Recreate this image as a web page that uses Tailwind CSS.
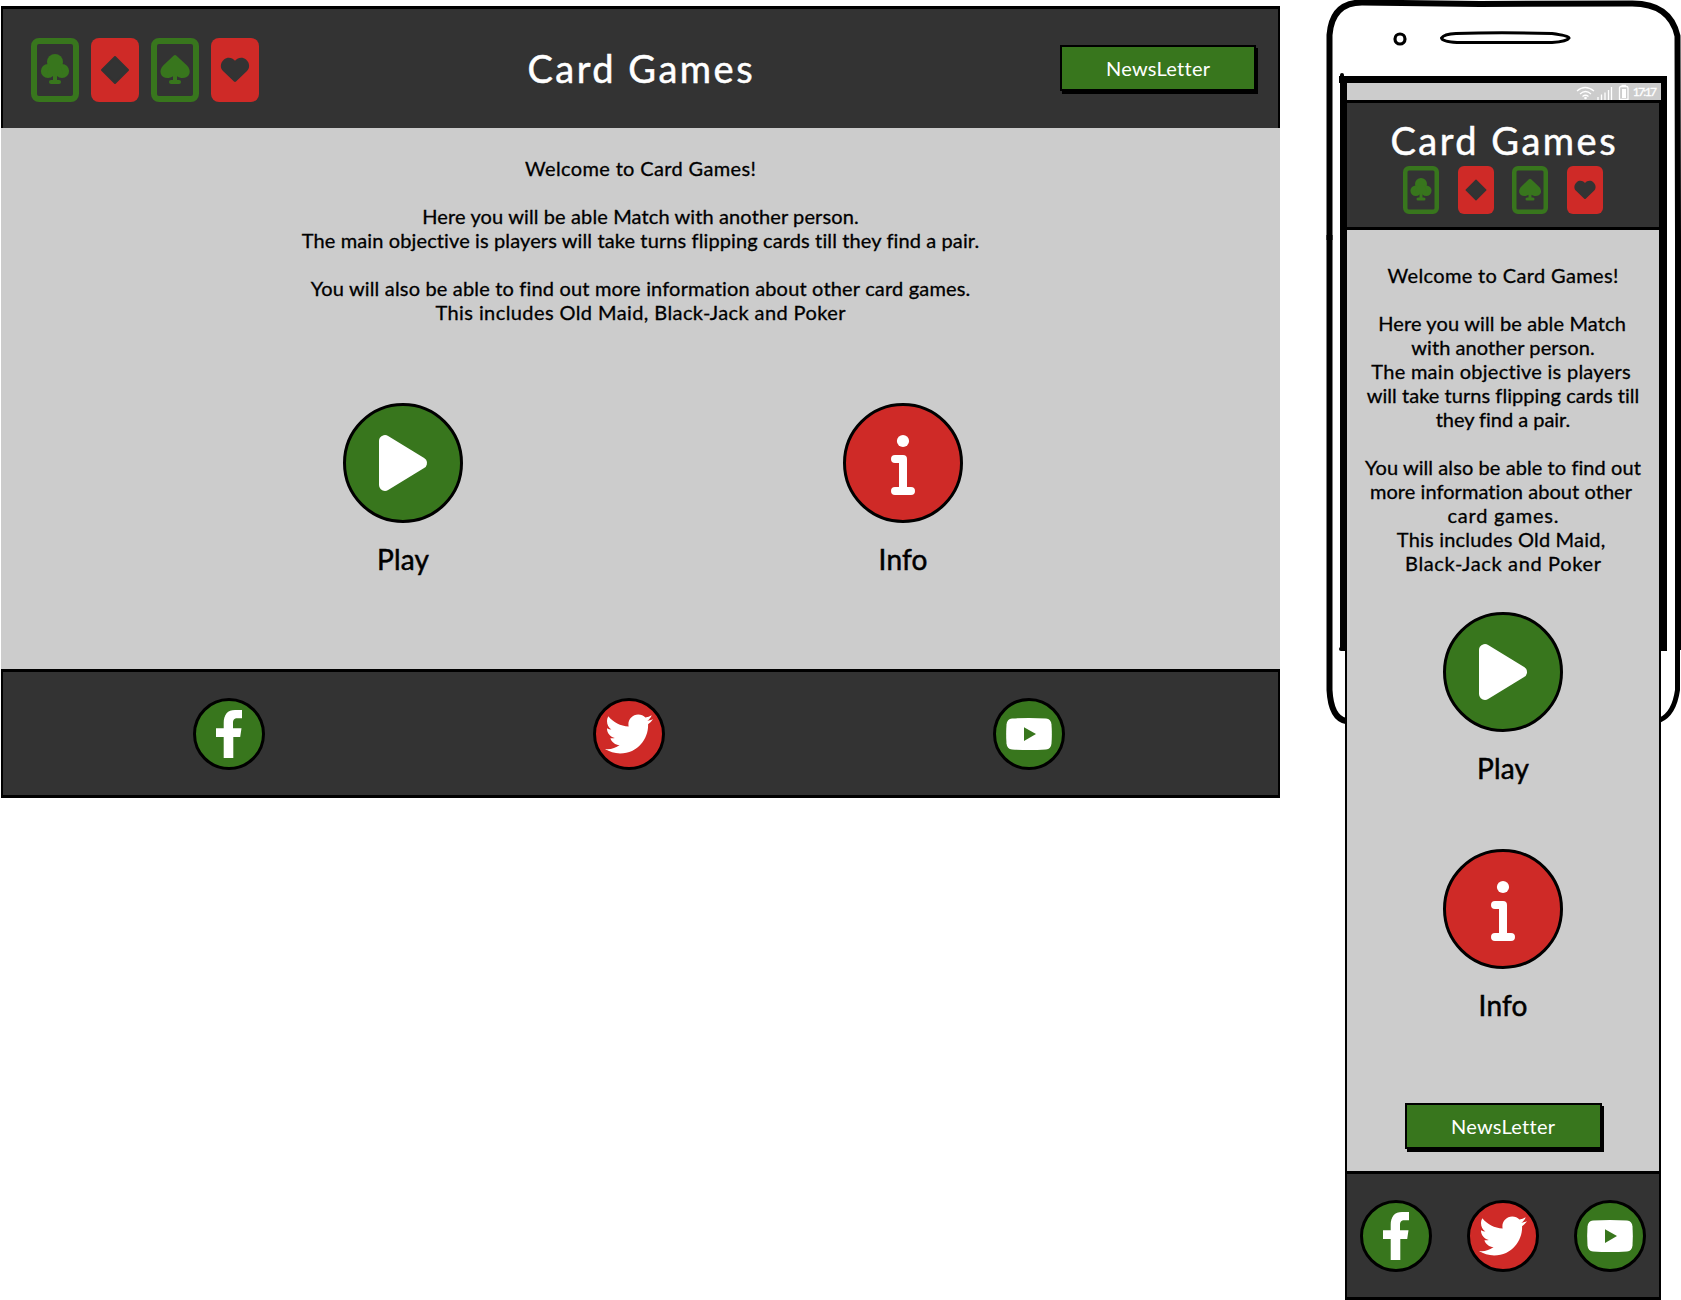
<!DOCTYPE html>
<html lang="en">
<head>
<meta charset="utf-8">
<title>Card Games</title>
<script src="https://cdn.jsdelivr.net/npm/@tailwindcss/browser@4"></script>
</head>
<body class="bg-white">
<svg width="0" height="0" class="absolute">
  <defs>
    <symbol id="club" viewBox="0 0 48 64"><rect x="3" y="3" width="42" height="58" rx="5" fill="none" stroke="#38761d" stroke-width="6"/><g fill="#38761d"><circle cx="24" cy="24" r="8"/><circle cx="17" cy="33" r="7.1"/><circle cx="31" cy="33" r="7.1"/><path d="M19 26h10l3 10H16zM22 34h4v10h-4z"/><rect x="18" y="42" width="12" height="4" rx="2"/></g></symbol>
    <symbol id="diamond" viewBox="0 0 48 64"><rect width="48" height="64" rx="8" fill="#cf2a27"/><path d="M24 19 37 32 24 45 11 32z" fill="#333" stroke="#333" stroke-width="2" stroke-linejoin="round"/></symbol>
    <symbol id="spade" viewBox="0 0 48 64"><rect x="3" y="3" width="42" height="58" rx="5" fill="none" stroke="#38761d" stroke-width="6"/><g fill="#38761d"><path d="M22.5 17.8q1.5-1.5 3 0L36 27.600C38.500 30 39.300 33.500 38.300 36 36.800 40 30.500 41.500 26 38.200V44h-4V38.200C17.500 41.500 11.200 40 9.900 36 8.900 33.500 9.700 30 12.200 27.600z"/><rect x="18" y="42" width="12" height="4" rx="2"/></g></symbol>
    <symbol id="heart" viewBox="0 0 48 64"><rect width="48" height="64" rx="8" fill="#cf2a27"/><path d="M24 22.800C27 19 32 19 35 21.500 39 25 39 30 36 33L25 43.600q-1 .9-2 0L12 33C9 30 9 25 13 21.500 16 19 21 19 24 22.800z" fill="#333"/></symbol>
    <symbol id="play" viewBox="0 0 120 120"><circle cx="60" cy="60" r="58.500" fill="#38761d" stroke="#000" stroke-width="3"/><path d="M42 38v44L78 60z" fill="#fff" stroke="#fff" stroke-width="12" stroke-linejoin="round"/></symbol>
    <symbol id="info" viewBox="0 0 120 120"><circle cx="60" cy="60" r="58.500" fill="#cf2a27" stroke="#000" stroke-width="3"/><circle cx="60" cy="38" r="6.100" fill="#fff"/><path d="M52 56h8v32M52 88h16" fill="none" stroke="#fff" stroke-width="8" stroke-linecap="round" stroke-linejoin="round"/></symbol>
    <symbol id="facebook" viewBox="0 0 72 72"><circle cx="36" cy="36" r="34.500" fill="#38761d" stroke="#000" stroke-width="3"/><path d="M30.700 60V38.900H23V30.200h7.700V25c0-8.500 4-13 11.300-13h7v8.300h-4.500c-3.500 0-4.500 1.700-4.500 5v4.900h8.500l-1.300 8.700H40.300V60z" fill="#fff"/></symbol>
    <symbol id="twitter" viewBox="0 0 72 72"><circle cx="36" cy="36" r="34.500" fill="#cf2a27" stroke="#000" stroke-width="3"/><path transform="translate(12 12) scale(.09375)" d="M459.370 151.716c.325 4.548.325 9.097.325 13.645 0 138.720-105.583 298.558-298.558 298.558-59.452 0-114.680-17.219-161.137-47.106 8.447.974 16.568 1.299 25.340 1.299 49.055 0 94.213-16.568 130.274-44.832-46.132-.975-84.792-31.188-98.112-72.772 6.498.974 12.995 1.624 19.818 1.624 9.421 0 18.843-1.300 27.614-3.573-48.081-9.747-84.143-51.980-84.143-102.985v-1.299c13.969 7.797 30.214 12.670 47.431 13.319-28.264-18.843-46.781-51.005-46.781-87.391 0-19.492 5.197-37.360 14.294-52.954 51.655 63.675 129.300 105.258 216.365 109.807-1.624-7.797-2.599-15.918-2.599-24.040 0-57.828 46.782-104.934 104.934-104.934 30.213 0 57.502 12.670 76.670 33.137 23.715-4.548 46.456-13.320 66.599-25.340-7.798 24.366-24.366 44.833-46.132 57.827 21.117-2.273 41.584-8.122 60.426-16.243-14.292 20.791-32.161 39.308-52.628 54.253z" fill="#fff"/></symbol>
    <symbol id="youtube" viewBox="0 0 72 72"><circle cx="36" cy="36" r="34.500" fill="#38761d" stroke="#000" stroke-width="3"/><path d="M19 20.600Q36 19.400 53 20.600 58 21 58.500 26.500 59.200 36 58.500 45.500 58 51 53 51.400 36 52.600 19 51.400 14 51 13.500 45.500 12.800 36 13.500 26.500 14 21 19 20.600z" fill="#fff"/><path d="M31 29.300v13.600l12-6.800z" fill="#38761d"/></symbol>
  </defs>
</svg>
<main class="relative flex h-[1300px] w-[1681px] overflow-hidden bg-white font-['Lato',sans-serif] text-[20px] leading-6 text-black">

  <section class="ml-px mt-1.5 flex h-[792px] w-[1279px] flex-col bg-[#ccc]">
    <header class="grid h-[122px] shrink-0 grid-cols-[1fr_auto_1fr] items-center border-x-2 border-t-[3px] border-black bg-[#333] pl-7 pr-[22px]">
      <div class="flex gap-3 pt-[3px]">
        <svg class="h-16 w-12"><use href="#club"/></svg><svg class="h-16 w-12"><use href="#diamond"/></svg><svg class="h-16 w-12"><use href="#spade"/></svg><svg class="h-16 w-12"><use href="#heart"/></svg>
      </div>
      <h1 class="mb-px flex h-12 w-[240px] justify-center whitespace-nowrap pr-[7px] text-[38px] leading-12 text-white [-webkit-text-stroke:0.5px_white]"><span data-w="225">Card Games</span></h1>
      <button class="mb-px flex h-[46px] w-[196px] items-center justify-center justify-self-end whitespace-nowrap border-2 border-black bg-[#38761d] text-white shadow-[2px_3px_0_#000]"><span data-w="103">NewsLetter</span></button>
    </header>
    <div class="flex h-[541px] shrink-0 flex-col pt-7">
      <div class="flex flex-col items-center gap-6 whitespace-nowrap [-webkit-text-stroke:0.3px_black]">
        <p><span data-w="230">Welcome to Card Games!</span></p>
        <div class="flex flex-col items-center"><p><span data-w="436">Here you will be able Match with another person.</span></p><p><span data-w="677">The main objective is players will take turns flipping cards till they find a pair.</span></p></div>
        <div class="flex flex-col items-center"><p><span data-w="659">You will also be able to find out more information about other card games.</span></p><p><span data-w="410">This includes Old Maid, Black-Jack and Poker</span></p></div>
      </div>
      <div class="mt-[79px] flex justify-center gap-[380px] pl-[25px] text-[28px] leading-8 [-webkit-text-stroke:0.5px_black]">
        <div class="flex w-[120px] flex-col items-center gap-5"><svg class="size-[120px]"><use href="#play"/></svg><span data-w="51">Play</span></div>
        <div class="flex w-[120px] flex-col items-center gap-5"><svg class="size-[120px]"><use href="#info"/></svg><span data-w="48">Info</span></div>
      </div>
    </div>
    <footer class="flex flex-1 items-center gap-[328px] border-x-2 border-y-[3px] border-black bg-[#333] pl-[190px]">
      <svg class="size-[72px]"><use href="#facebook"/></svg><svg class="size-[72px]"><use href="#twitter"/></svg><svg class="size-[72px]"><use href="#youtube"/></svg>
    </footer>
  </section>

  <svg class="absolute left-[1320px] top-0" width="361" height="740" fill="none" stroke="#000">
    <path d="M9.500 240V35Q12 2.500 42 2.500L160 4 310 3.500Q350 2.500 357.500 36L358 240V650" stroke-width="6"/>
    <path d="M9.500 235V690Q11 718 26 721" stroke-width="6"/>
    <path d="M357.500 640V690Q354 714 340 720" stroke-width="5"/>
    <circle cx="80" cy="39" r="5" stroke-width="3.200"/>
    <path d="M136 33.500Q180 32 232 33.500 248 35.500 249 38 247 41.500 232 42.500H137Q122 41.500 121.500 38 124 34 136 33.500z" stroke-width="3"/>
    <path d="M19 79.500H347" stroke-width="7"/>
    <path d="M23.500 77V650M343.500 80V651" stroke-width="7"/>
    <path d="M22 75V80M21 649h4" stroke-width="4" stroke-linecap="round"/>
  </svg>

  <section class="relative ml-[65px] mt-[83px] flex h-[1217px] w-[316px] flex-col">
    <div class="ml-0.5 flex h-[17px] shrink-0 items-center justify-end bg-[#ccc] pr-1 text-white">
      <svg class="h-[17px] w-[56px]" fill="none" stroke="#fff" stroke-width="1.300"><path d="M2 8Q10 1 19 8M5 11Q10.500 6 16 11M7.500 13.500Q10.500 11 13.500 13.500"/><circle cx="10.500" cy="15" r="1.300" fill="#fff" stroke="none"/><path d="M23 14v3M26.500 11.500V17M30 9.500V17M33.500 7V17M36.500 4V17"/><path d="M44.500 16.500V5Q44.500 3.500 46 3.500h5.500Q53 3.500 53 5V16.500zM46.500 2.500h4.500"/><path d="M47 6h4v9h-4z" fill="#fff" stroke="none"/></svg>
      <span data-w="24" class="ml-[2px] text-[12px] leading-4 [-webkit-text-stroke:0.3px_white]">17:17</span>
    </div>
    <header class="flex h-[130px] shrink-0 flex-col items-center border-x-2 border-y-[3px] border-black bg-[#333]">
      <h1 class="mt-[13px] h-[50px] whitespace-nowrap text-[38px] leading-12 text-white [-webkit-text-stroke:0.5px_white]"><span data-w="225">Card Games</span></h1>
      <div class="flex gap-[18.7px]">
        <svg class="h-12 w-9"><use href="#club"/></svg><svg class="h-12 w-9"><use href="#diamond"/></svg><svg class="h-12 w-9"><use href="#spade"/></svg><svg class="h-12 w-9"><use href="#heart"/></svg>
      </div>
    </header>
    <div class="flex h-[941px] shrink-0 flex-col items-center border-x-2 border-black bg-[#ccc] pt-[33px]">
      <div class="flex flex-col items-center gap-6 whitespace-nowrap [-webkit-text-stroke:0.3px_black]">
        <p><span data-w="230">Welcome to Card Games!</span></p>
        <div class="flex flex-col items-center"><p class="pr-0.5"><span data-w="247">Here you will be able Match</span></p><p><span data-w="183">with another person.</span></p><p class="pr-1"><span data-w="259">The main objective is players</span></p><p><span data-w="273">will take turns flipping cards till</span></p><p><span data-w="134">they find a pair.</span></p></div>
        <div class="flex flex-col items-center"><p><span data-w="275">You will also be able to find out</span></p><p class="pr-1"><span data-w="262">more information about other</span></p><p><span data-w="110">card games.</span></p><p class="pr-1"><span data-w="208">This includes Old Maid,</span></p><p><span data-w="195">Black-Jack and Poker</span></p></div>
      </div>
      <div class="mt-[37px] flex flex-col gap-[65px] text-[28px] leading-8 [-webkit-text-stroke:0.5px_black]">
        <div class="flex w-[120px] flex-col items-center gap-5"><svg class="size-[120px]"><use href="#play"/></svg><span data-w="51">Play</span></div>
        <div class="flex w-[120px] flex-col items-center gap-5"><svg class="size-[120px]"><use href="#info"/></svg><span data-w="48">Info</span></div>
      </div>
      <button class="mt-[82px] flex h-[46px] w-[197px] items-center justify-center whitespace-nowrap border-2 border-black bg-[#38761d] text-white shadow-[2px_3px_0_#000]"><span data-w="103">NewsLetter</span></button>
    </div>
    <footer class="flex flex-1 items-center justify-center gap-[35px] border-x-2 border-y-[3px] border-black bg-[#333]">
      <svg class="size-[72px]"><use href="#facebook"/></svg><svg class="size-[72px]"><use href="#twitter"/></svg><svg class="size-[72px]"><use href="#youtube"/></svg>
    </footer>
  </section>
</main>
<script>
  // Track each label to its design width, again once styles and fonts are in
  function fitLabels() {
    for (const el of document.querySelectorAll('[data-w]')) {
      el.style.display = 'inline-block';
      el.style.whiteSpace = 'nowrap';
      el.style.letterSpacing = '0px';
      el.style.marginRight = '0px';
      const gap = (Number(el.dataset.w) + 0.5 - el.offsetWidth) / (el.textContent.length - 1);
      el.style.letterSpacing = gap + 'px';
      el.style.marginRight = -gap + 'px';
    }
  }
  fitLabels();
  window.addEventListener('load', fitLabels);
  document.fonts.ready.then(fitLabels);
  requestAnimationFrame(() => requestAnimationFrame(fitLabels));
</script>
</body>
</html>
